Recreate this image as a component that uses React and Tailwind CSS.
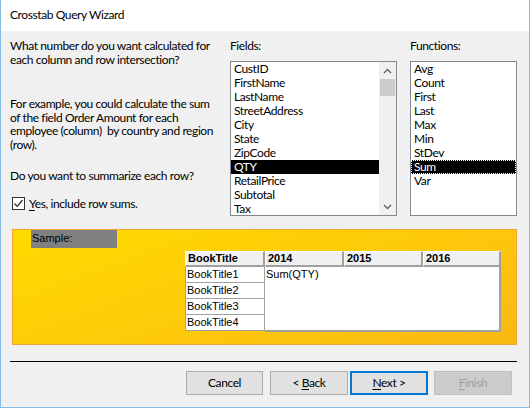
import React from "react";

const fields = ["CustID", "FirstName", "LastName", "StreetAddress", "City", "State", "ZipCode", "QTY", "RetailPrice", "Subtotal", "Tax"];
const functions = ["Avg", "Count", "First", "Last", "Max", "Min", "StDev", "Sum", "Var"];

function Chevron({ up }) {
  return (
    <svg width="9" height="6" viewBox="0 0 9 6" className="block">
      <path d={up ? "M1 5 L4.5 1.5 L8 5" : "M1 1 L4.5 4.5 L8 1"} fill="none" stroke="#606060" strokeWidth="1.3" />
    </svg>
  );
}

function HeaderCell({ children, w }) {
  return (
    <div
      className={`${w} h-[16px] bg-[#f0f0f0] border-t border-l border-t-white border-l-white border-r-2 border-b-2 border-r-[#a0a0a0] border-b-[#a0a0a0] pl-[2px] font-bold text-[11px] leading-[13px] [font-family:'Liberation_Sans',sans-serif]`}
    >
      {children}
    </div>
  );
}

export default function App() {
  return (
    <div className="w-[530px] h-[408px] flex flex-col border-x border-b border-[#86bde6] text-black text-[12px] tracking-[-0.4px] [font-family:Lato,'Liberation_Sans',sans-serif]">
      {/* Title bar */}
      <div className="h-[31px] bg-white flex items-center pl-[9px] pb-[1px]">Crosstab Query Wizard</div>

      {/* Body */}
      <div className="flex-1 bg-[#f0f0f0] flex flex-col">
        <div className="flex pt-[8px] h-[184px]">
          {/* Left text */}
          <div className="ml-[9px] w-[212px] leading-[13.5px] whitespace-nowrap">
            <p>
              What number do you want calculated for
              <br />
              each column and row intersection?
            </p>
            <p className="mt-[31px] whitespace-pre">
              {"For example, you could calculate the sum\nof the field Order Amount for each\nemployee (column)  by country and region\n(row)."}
            </p>
            <p className="mt-[18px]">Do you want to summarize each row?</p>
            <div className="mt-[14px] ml-[2px] flex items-center gap-[4px]">
              <div className="w-[13px] h-[13px] border border-[#333] bg-white flex items-center justify-center">
                <svg width="11" height="11" viewBox="0 0 11 11">
                  <path d="M1.5 5.5 L4.2 8.3 L9.5 2" fill="none" stroke="#222" strokeWidth="1.2" />
                </svg>
              </div>
              <span>
                <span className="underline underline-offset-2">Y</span>es, include row sums.
              </span>
            </div>
          </div>

          {/* Fields */}
          <div className="ml-[8px] w-[167px]">
            <div className="leading-[14px]">Fields:</div>
            <div className="mt-[8px] h-[155px] border border-[#828790] bg-white flex overflow-hidden">
              <div className="flex-1">
                {fields.map((f) => (
                  <div
                    key={f}
                    className={`h-[14px] leading-[14px] pl-[3px] ${f === "QTY" ? "bg-black text-white" : ""}`}
                  >
                    {f}
                  </div>
                ))}
              </div>
              <div className="w-[17px] bg-[#f0f0f0] flex flex-col items-center">
                <div className="h-[17px] flex items-center justify-center">
                  <Chevron up />
                </div>
                <div className="w-[15px] h-[17px] bg-[#cdcdcd]" />
                <div className="flex-1" />
                <div className="h-[17px] flex items-center justify-center">
                  <Chevron />
                </div>
              </div>
            </div>
          </div>

          {/* Functions */}
          <div className="ml-[13px] w-[107px]">
            <div className="leading-[14px]">Functions:</div>
            <div className="mt-[8px] h-[155px] border border-[#828790] bg-white overflow-hidden">
              {functions.map((f) => (
                <div
                  key={f}
                  className={`h-[14px] leading-[12px] pl-[2px] border border-dotted ${
                    f === "Sum" ? "bg-black text-white border-white" : "border-transparent"
                  }`}
                >
                  {f}
                </div>
              ))}
            </div>
          </div>
        </div>

        {/* Sample panel */}
        <div className="mt-[14px] ml-[11px] w-[505px] h-[116px] border border-[#efa43a] bg-[linear-gradient(160deg,#ffdb00_0%,#fdc90a_55%,#f8b914_100%)] overflow-hidden">
          <div className="ml-[18px] w-[86px] h-[18px] bg-[#808080] pl-[1px] leading-[16px] text-[11px] tracking-normal [font-family:'Liberation_Sans',sans-serif]">
            Sample:
          </div>
          <div className="mt-[3px] ml-[172px] flex flex-col tracking-normal">
            <div className="flex">
              <HeaderCell w="w-[80px]">BookTitle</HeaderCell>
              <HeaderCell w="w-[79px]">2014</HeaderCell>
              <HeaderCell w="w-[79px]">2015</HeaderCell>
              <HeaderCell w="w-[78px]">2016</HeaderCell>
            </div>
            <div className="flex text-[11px] [font-family:'Liberation_Sans',sans-serif]">
              <div className="w-[80px] flex flex-col">
                {["BookTitle1", "BookTitle2", "BookTitle3", "BookTitle4"].map((b) => (
                  <div key={b} className="h-[16px] bg-white border-l border-b border-r border-[#a0a0a0] pl-[1px] leading-[15px]">
                    {b}
                  </div>
                ))}
              </div>
              <div className="w-[236px] h-[65px] bg-white border-r-2 border-b-2 border-[#a0a0a0] pl-[1px] leading-[14px]">
                Sum(QTY)
              </div>
            </div>
          </div>
        </div>

        {/* Separator */}
        <div className="mt-[16px] ml-[9px] w-[507px] h-px bg-black" />

        {/* Buttons */}
        <div className="mt-[9px] ml-[185px] flex">
          <button className="w-[77px] h-[24px] bg-[#e1e1e1] border border-[#adadad]">Cancel</button>
          <button className="ml-[7px] w-[78px] h-[24px] bg-[#e1e1e1] border border-[#adadad]">
            &lt; <span className="underline underline-offset-2">B</span>ack
          </button>
          <button className="ml-[2px] w-[78px] h-[24px] bg-[#e1e1e1] border-2 border-[#0078d7]">
            <span className="underline underline-offset-2">N</span>ext &gt;
          </button>
          <button className="ml-[6px] w-[78px] h-[24px] bg-[#cccccc] border border-[#bfbfbf] text-[#a0a0a0]">
            <span className="underline underline-offset-2">F</span>inish
          </button>
        </div>
      </div>
    </div>
  );
}
